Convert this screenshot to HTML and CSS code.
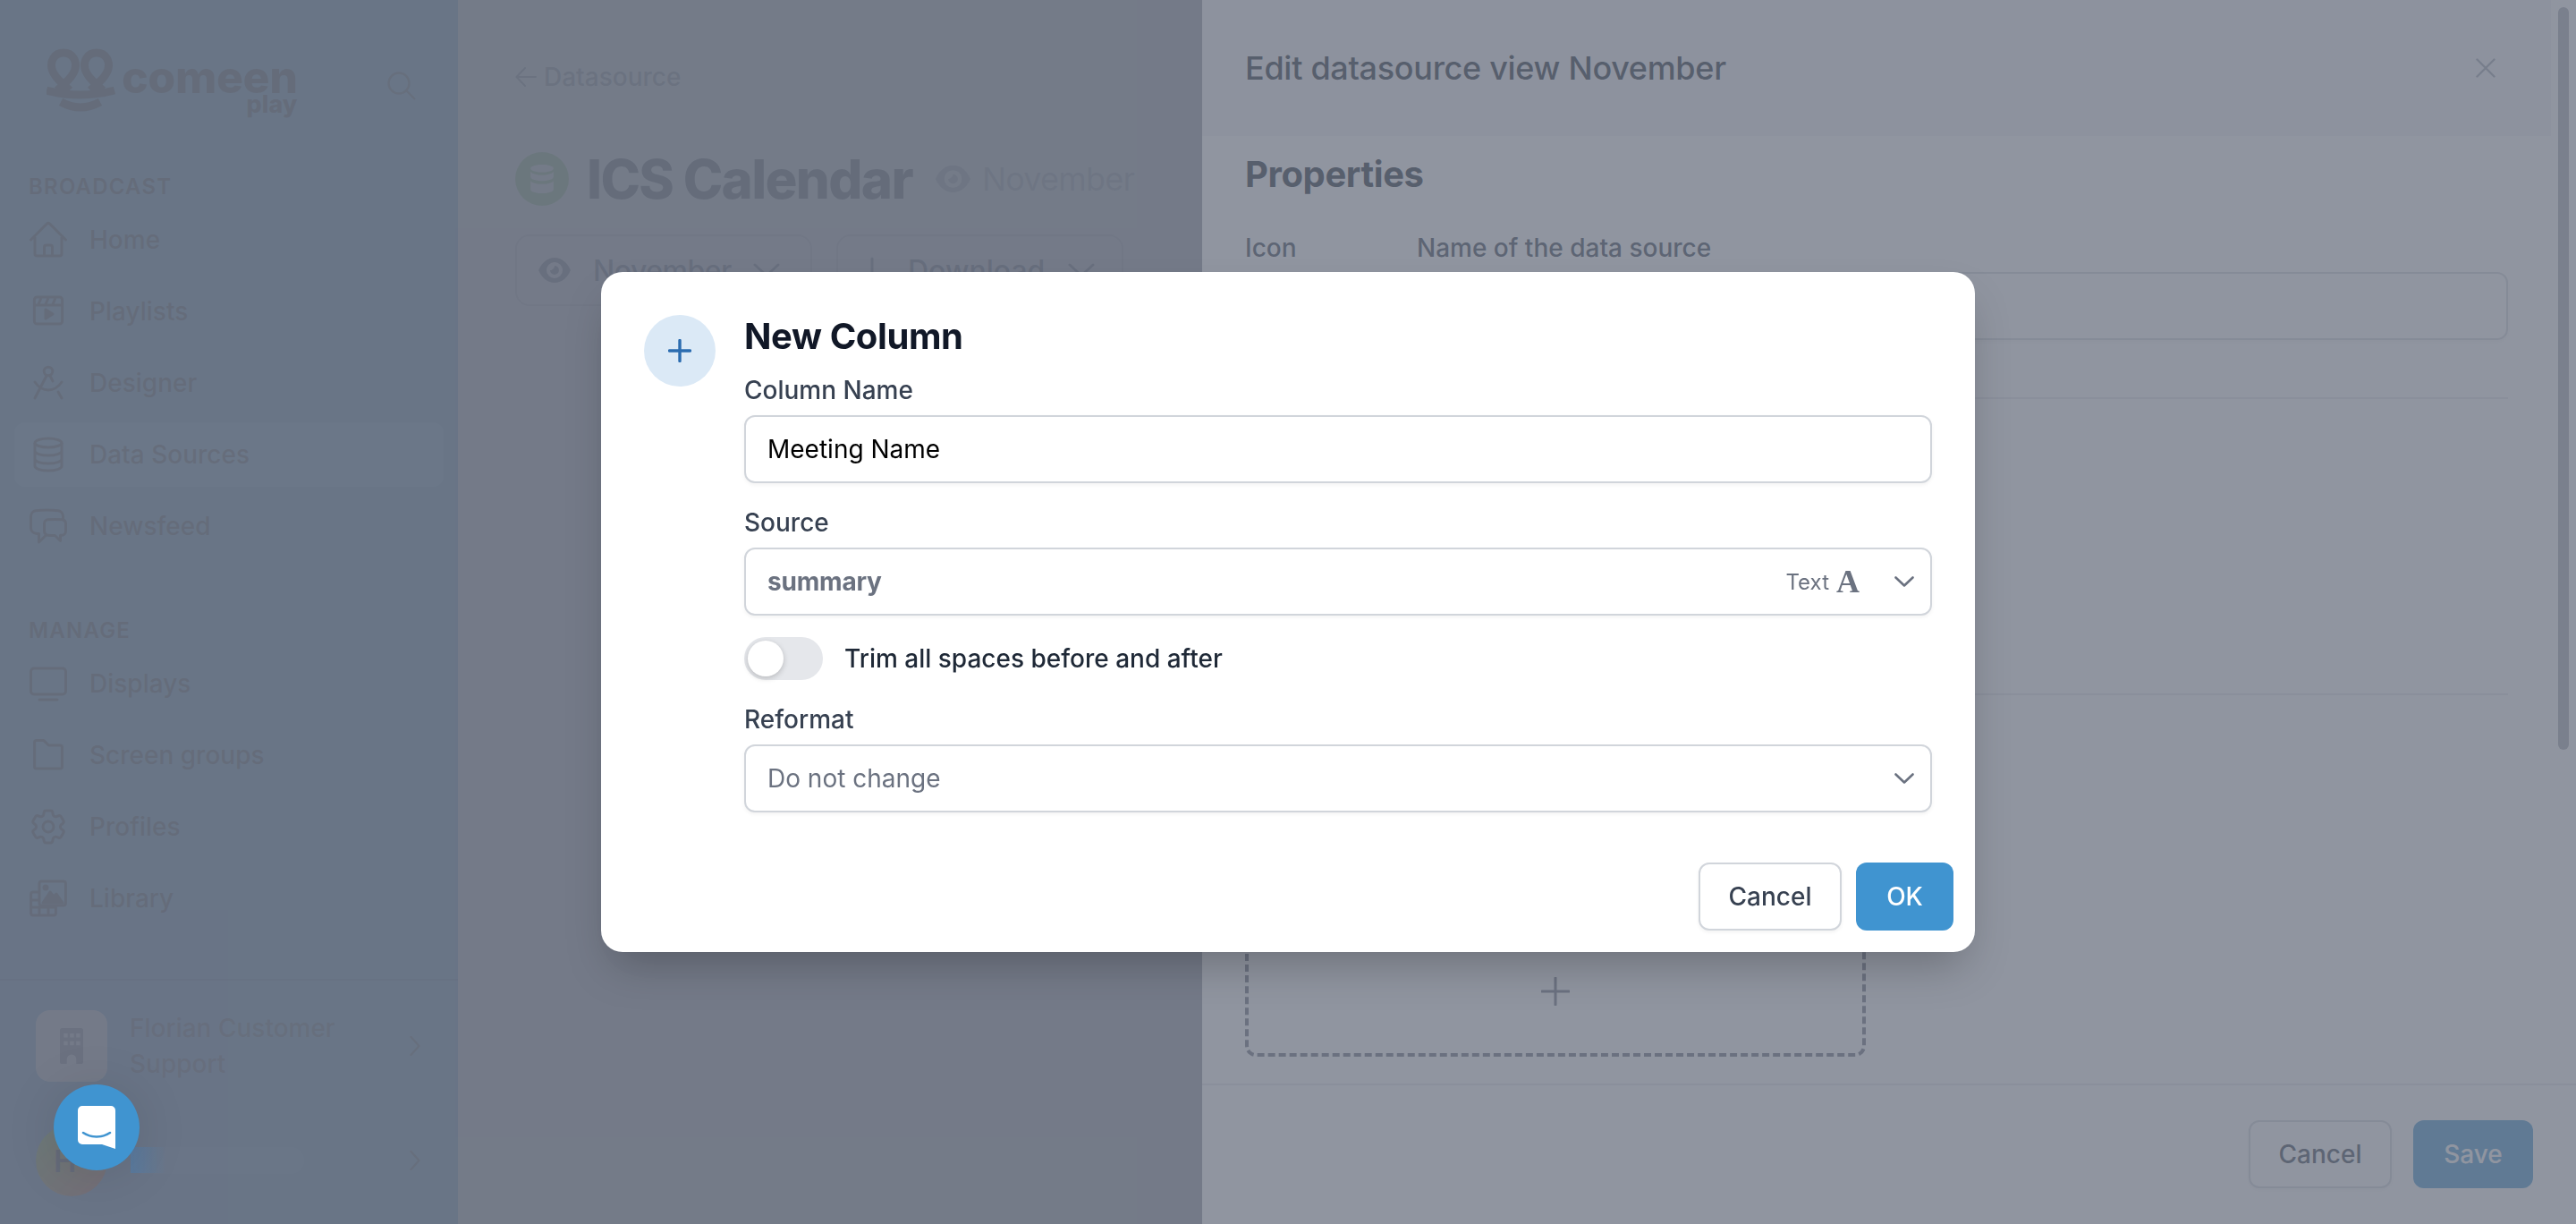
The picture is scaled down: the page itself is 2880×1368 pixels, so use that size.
FILE: index.html
```html
<!DOCTYPE html>
<html lang="en">
<head>
<meta charset="utf-8">
<title>Comeen Play</title>
<link rel="stylesheet" href="styles.css">
</head>
<body>
<div class="app">
  <aside class="sidebar">
    <div class="brand">
      <svg class="logo" viewBox="52 52 78 74" fill="none" stroke="currentColor" stroke-width="9">
        <path d="M71 58C60 58 56 68 58 76C60 84 68 91 78 100"/>
        <path d="M71 58C82 58 86 68 84 76C82 84 74 91 64 100"/>
        <path d="M108 58C97 58 93 68 95 76C97 84 105 91 115 100"/>
        <path d="M108 58C119 58 123 68 121 76C119 84 111 91 101 100"/>
        <path d="M52 100Q90 110 128 100"/>
        <path d="M68 113Q90 125 112 113"/>
      </svg>
      <div class="wordmark">
        <span class="word-main">comeen</span>
        <span class="word-sub">play</span>
      </div>
      <svg class="search" viewBox="0 0 32 32" fill="none" stroke="currentColor" stroke-width="2.4"><circle cx="13" cy="13" r="11.5"/><path d="M21.5 21.5L31 31"/></svg>
    </div>
    <div class="section-title">BROADCAST</div>
    <nav class="nav">
      <a class="nav-item"><svg class="nav-icon" viewBox="0 0 24 24" fill="none" stroke="currentColor" stroke-width="1.5" stroke-linecap="round" stroke-linejoin="round"><path d="M2.25 12l8.954-8.955c.44-.439 1.152-.439 1.591 0L21.75 12M4.5 9.75v10.125c0 .621.504 1.125 1.125 1.125H9.75v-4.875c0-.621.504-1.125 1.125-1.125h2.25c.621 0 1.125.504 1.125 1.125V21h4.125c.621 0 1.125-.504 1.125-1.125V9.75M8.25 21h8.25"/></svg><span>Home</span></a>
      <a class="nav-item"><svg class="nav-icon" viewBox="0 0 24 24" fill="none" stroke="currentColor" stroke-width="1.5" stroke-linejoin="round"><rect x="4.2" y="4" width="15.6" height="15" rx="1.5"/><path d="M4.2 8.5h15.6M8 4.5 6.5 8M12 4.5 10.5 8M16 4.5 14.5 8"/><path d="M10.5 11v5l4-2.5z" fill="currentColor"/></svg><span>Playlists</span></a>
      <a class="nav-item"><svg class="nav-icon" viewBox="0 0 24 24" fill="none" stroke="currentColor" stroke-width="1.5" stroke-linecap="round"><circle cx="12" cy="5.5" r="2.4"/><path d="M11 8 4.5 20.5M13 8l1.5 3M17.5 17l2 3.5M4.5 11.5C7 15 9 16 12 16s5-1 7.500-4.500"/></svg><span>Designer</span></a>
      <a class="nav-item is-active"><svg class="nav-icon" viewBox="0 0 24 24" fill="none" stroke="currentColor" stroke-width="1.5"><ellipse cx="12" cy="5.500" rx="7.500" ry="2.500"/><path d="M4.500 5.500v13c0 1.400 3.400 2.500 7.500 2.500s7.500-1.100 7.500-2.500v-13M4.500 10c0 1.400 3.400 2.500 7.500 2.500s7.500-1.100 7.500-2.500M4.500 14.500c0 1.400 3.400 2.500 7.500 2.500s7.500-1.100 7.500-2.500"/></svg><span>Data Sources</span></a>
      <a class="nav-item"><svg class="nav-icon" viewBox="0 0 24 24" fill="none" stroke="currentColor" stroke-width="1.500" stroke-linecap="round" stroke-linejoin="round"><path d="M20.250 8.511c.884.284 1.500 1.128 1.500 2.097v4.286c0 1.136-.847 2.100-1.980 2.193-.340.027-.680.052-1.020.072v3.091l-3-3c-1.354 0-2.694-.055-4.020-.163a2.115 2.115 0 01-.825-.242m9.345-8.334a2.126 2.126 0 00-.476-.095 48.640 48.640 0 00-8.048 0c-1.131.094-1.976 1.057-1.976 2.192v4.286c0 .837.460 1.580 1.155 1.951m9.345-8.334V6.637c0-1.621-1.152-3.026-2.760-3.235A48.455 48.455 0 0011.250 3c-2.115 0-4.198.137-6.240.402-1.608.209-2.760 1.614-2.760 3.235v6.226c0 1.621 1.152 3.026 2.760 3.235.577.075 1.157.140 1.740.194V21l4.155-4.155"/></svg><span>Newsfeed</span></a>
    </nav>
    <div class="section-title section-manage">MANAGE</div>
    <nav class="nav">
      <a class="nav-item"><svg class="nav-icon" viewBox="0 0 24 24" fill="none" stroke="currentColor" stroke-width="1.500" stroke-linecap="round"><rect x="2.250" y="3.500" width="19.500" height="14.500" rx="1.800"/><path d="M7 21h10"/></svg><span>Displays</span></a>
      <a class="nav-item"><svg class="nav-icon" viewBox="0 0 24 24" fill="none" stroke="currentColor" stroke-width="1.500" stroke-linejoin="round"><path d="M4.300 18.500V4.800c0-.6.400-1 1-1h4.200l2.700 2.700h6.500c.6 0 1 .4 1 1v11c0 .6-.4 1-1 1H5.300c-.6 0-1-.4-1-1z"/></svg><span>Screen groups</span></a>
      <a class="nav-item"><svg class="nav-icon" viewBox="0 0 24 24" fill="none" stroke="currentColor" stroke-width="1.500" stroke-linejoin="round"><path d="M9.594 3.940c.090-.542.560-.940 1.110-.940h2.593c.550 0 1.020.398 1.110.940l.213 1.281c.063.374.313.686.645.870.074.040.147.083.220.127.324.196.720.257 1.075.124l1.217-.456a1.125 1.125 0 011.370.490l1.296 2.247a1.125 1.125 0 01-.260 1.431l-1.003.827c-.293.240-.438.613-.431.992a6.759 6.759 0 010 .255c-.007.378.138.750.430.990l1.005.828c.424.350.534.954.260 1.430l-1.298 2.247a1.125 1.125 0 01-1.369.491l-1.217-.456c-.355-.133-.750-.072-1.076.124a6.570 6.570 0 01-.220.128c-.331.183-.581.495-.644.869l-.213 1.280c-.090.543-.560.941-1.110.941h-2.594c-.550 0-1.020-.398-1.110-.940l-.213-1.281c-.062-.374-.312-.686-.644-.870a6.520 6.520 0 01-.220-.127c-.325-.196-.720-.257-1.076-.124l-1.217.456a1.125 1.125 0 01-1.369-.490l-1.297-2.247a1.125 1.125 0 01.260-1.431l1.004-.827c.292-.240.437-.613.430-.992a6.932 6.932 0 010-.255c.007-.378-.138-.750-.430-.990l-1.004-.828a1.125 1.125 0 01-.260-1.430l1.297-2.247a1.125 1.125 0 011.370-.491l1.216.456c.356.133.751.072 1.076-.124.072-.044.146-.087.220-.128.332-.183.582-.495.644-.869l.214-1.281z"/><circle cx="12" cy="12" r="3"/></svg><span>Profiles</span></a>
      <a class="nav-item"><svg class="nav-icon" viewBox="0 0 24 24" fill="none" stroke="currentColor" stroke-width="1.500" stroke-linejoin="round"><rect x="7" y="2.500" width="14.700" height="13.500" rx="1.300"/><path d="M9 14.500l4-6 2 2.500 1.500-1.500 3.500 5z" fill="currentColor"/><circle cx="10.500" cy="6" r="1" fill="currentColor"/><path d="M7 8.500H3.500c-.7 0-1.200.5-1.200 1.200v10.600c0 .7.500 1.200 1.200 1.200h11.500c.7 0 1.200-.5 1.200-1.200V16M2.300 13h4.700M2.300 17h14M7 17v5M12 17v5"/></svg><span>Library</span></a>
    </nav>
    <div class="account">
      <div class="account-row">
        <div class="org-avatar"><svg class="org-icon" viewBox="0 0 30 46"><path class="org-shape" fill-rule="evenodd" d="M3 0h24a3 3 0 013 3v40a3 3 0 01-3 3h-6v-6a6 6 0 00-12 0v6H3a3 3 0 01-3-3V3a3 3 0 013-3zM5 7v5h5V7zm8 0v5h5V7zm8 0v5h5V7zM5 17v5h5v-5zm8 0v5h5v-5zm8 0v5h5v-5z"/></svg></div>
        <div class="account-name">Florian Customer Support</div>
        <svg class="account-chevron" viewBox="0 0 12 24" fill="none" stroke="currentColor" stroke-width="2.400" stroke-linecap="round" stroke-linejoin="round"><path d="M1.500 2l9 10-9 10"/></svg>
      </div>
      <div class="account-row user-row">
        <div class="user-avatar">H</div>
        <div class="user-name"></div>
        <svg class="account-chevron" viewBox="0 0 12 24" fill="none" stroke="currentColor" stroke-width="2.400" stroke-linecap="round" stroke-linejoin="round"><path d="M1.500 2l9 10-9 10"/></svg>
      </div>
    </div>
  </aside>

  <main class="main">
    <a class="back"><svg class="back-arrow" viewBox="0 0 24 24" fill="none" stroke="currentColor" stroke-width="2" stroke-linecap="round" stroke-linejoin="round"><path d="M23 12H2M11 2 1.500 12 11 22"/></svg><span>Datasource</span></a>
    <header class="page-head">
      <div class="page-icon"><svg class="page-icon-svg" viewBox="0 0 24 30" fill="#fff"><path d="M12 0c6.600 0 12 1.800 12 4s-5.400 4-12 4S0 6.200 0 4s5.400-4 12-4z"/><path d="M0 7.500C2 10 7 11 12 11s10-1 12-3.500V13c0 2.200-5.400 4-12 4S0 15.200 0 13z"/><path d="M0 17c2 2.500 7 3.500 12 3.500S22 19.500 24 17v9c0 2.200-5.400 4-12 4S0 28.200 0 26z"/></svg></div>
      <h1 class="page-title">ICS Calendar</h1>
      <svg class="head-eye" viewBox="0 0 36 28"><path class="eye-shape" fill-rule="evenodd" d="M18 0c9 0 15 7 18 14-3 7-9 14-18 14S3 21 0 14C3 7 9 0 18 0zm0 5a9 9 0 100 18 9 9 0 000-18zm0 4a5 5 0 11-5 5c2 0 5-2 5-5z"/></svg>
      <span class="head-view">November</span>
    </header>
    <div class="toolbar">
      <button class="tool-btn tool-view">
        <svg class="tool-eye" viewBox="0 0 36 28"><path class="eye-shape" fill-rule="evenodd" d="M18 0c9 0 15 7 18 14-3 7-9 14-18 14S3 21 0 14C3 7 9 0 18 0zm0 5a9 9 0 100 18 9 9 0 000-18zm0 4a5 5 0 11-5 5c2 0 5-2 5-5z"/></svg>
        <span>November</span>
        <svg class="tool-chevron" viewBox="0 0 30 16" fill="none" stroke="currentColor" stroke-width="3" stroke-linecap="round" stroke-linejoin="round"><path d="M2 2l13 12L28 2"/></svg>
      </button>
      <button class="tool-btn tool-download">
        <svg class="tool-down" viewBox="0 0 20 30" fill="none" stroke="currentColor" stroke-width="3" stroke-linecap="round" stroke-linejoin="round"><path d="M10 2v25M2 19l8 8 8-8"/></svg>
        <span>Download</span>
        <svg class="tool-chevron" viewBox="0 0 30 16" fill="none" stroke="currentColor" stroke-width="3" stroke-linecap="round" stroke-linejoin="round"><path d="M2 2l13 12L28 2"/></svg>
      </button>
    </div>
  </main>
</div>

<div class="backdrop"></div>

<section class="panel">
  <div class="panel-head">
    <h2 class="panel-title">Edit datasource view November</h2>
    <svg class="panel-close" viewBox="0 0 22 22" fill="none" stroke="currentColor" stroke-width="2.400" stroke-linecap="round"><path d="M1.500 1.500l19 19M20.500 1.500l-19 19"/></svg>
  </div>
  <div class="panel-body">
    <h3 class="panel-sub">Properties</h3>
    <div class="prop-labels"><span class="prop-icon-label">Icon</span><span>Name of the data source</span></div>
    <div class="prop-row"><div class="prop-icon-slot"></div><div class="prop-input"></div></div>
    <div class="rule rule-one"></div>
    <div class="rule rule-two"></div>
    <div class="drop">
      <svg class="drop-plus" viewBox="0 0 32 32" fill="none" stroke="currentColor" stroke-width="3" stroke-linecap="round"><path d="M16 1v30M1 16h30"/></svg>
    </div>
  </div>
  <div class="panel-foot">
    <button class="btn btn-ghost">Cancel</button>
    <button class="btn btn-primary btn-save">Save</button>
  </div>
  <div class="scroll-thumb"></div>
</section>

<div class="backdrop backdrop-top">
  <div class="modal">
    <div class="modal-main">
      <div class="modal-badge"><svg class="modal-plus" viewBox="0 0 26 26" fill="none" stroke="currentColor" stroke-width="3.400" stroke-linecap="round"><path d="M13 1.500v23M1.500 13h23"/></svg></div>
      <form class="form">
        <h2 class="modal-title">New Column</h2>
        <label class="field-label">Column Name</label>
        <div class="field field-input">Meeting Name</div>
        <label class="field-label field-gap">Source</label>
        <div class="field field-select">
          <span class="source-value">summary</span>
          <span class="source-type">Text</span>
          <span class="source-glyph">A</span>
          <svg class="select-chevron" viewBox="0 0 22 12" fill="none" stroke="currentColor" stroke-width="2.600" stroke-linecap="round" stroke-linejoin="round"><path d="M1.500 1.500 11 10.500l9.500-9"/></svg>
        </div>
        <div class="switch-row">
          <span class="switch"><span class="switch-knob"></span></span>
          <span class="switch-label">Trim all spaces before and after</span>
        </div>
        <label class="field-label field-gap">Reformat</label>
        <div class="field field-select">
          <span class="reformat-value">Do not change</span>
          <svg class="select-chevron" viewBox="0 0 22 12" fill="none" stroke="currentColor" stroke-width="2.600" stroke-linecap="round" stroke-linejoin="round"><path d="M1.500 1.500 11 10.500l9.500-9"/></svg>
        </div>
      </form>
    </div>
    <div class="modal-foot">
      <button class="btn btn-ghost btn-cancel">Cancel</button>
      <button class="btn btn-primary btn-ok">OK</button>
    </div>
  </div>
</div>

<div class="name-fade"></div>
<div class="launcher">
  <svg class="launcher-icon" viewBox="0 0 42 48"><path fill="#fff" d="M5 0h32a5 5 0 015 5v43l-15-5H5a5 5 0 01-5-5V5a5 5 0 015-5z"/><path d="M6 30c9 6 21 6 30 0" fill="none" stroke="#4094d0" stroke-width="2.600" stroke-linecap="round"/></svg>
</div>
</body>
</html>
```
FILE: styles.css
```css
* { box-sizing: border-box; }
html, body { margin: 0; height: 100%; overflow: hidden; }
body { font-family: Inter, "Liberation Sans", sans-serif; color: #111827; background: #fff; }
h1, h2, h3 { margin: 0; }
button { font-family: inherit; cursor: default; }

.app { display: flex; height: 1368px; }

/* Sidebar */
.sidebar { width: 512px; flex: none; background: rgb(80, 160, 224); display: flex; flex-direction: column; color: #111827; }
.brand { height: 189px; flex: none; padding: 53px 0 0 52px; display: flex; align-items: flex-start; color: #111827; }
.logo { width: 78px; height: 74px; flex: none; }
.wordmark { display: flex; flex-direction: column; align-items: flex-end; margin: 16px 0 0 6px; font-weight: 800; }
.word-main { font-size: 50px; line-height: 34px; letter-spacing: -0.4px; }
.word-sub { font-size: 27px; line-height: 26px; margin-top: 1px; }
.search { width: 32px; height: 32px; margin: 27px 0 0 100px; color: #374151; flex: none; }
.section-title { height: 40px; line-height: 40px; padding-left: 32px; font-size: 24px; font-weight: 600; letter-spacing: 1.2px; flex: none; }
.section-manage { margin-top: 61px; }
.nav { display: flex; flex-direction: column; gap: 8px; margin: 3px 16px 0; flex: none; }
.nav-item { height: 72px; display: flex; align-items: center; gap: 22px; padding-left: 14px; border-radius: 12px; font-size: 28px; font-weight: 500; }
.nav-item.is-active { background: rgb(110, 190, 250); color: #1f2937; }
.nav-icon { width: 48px; height: 48px; flex: none; }
.account { margin-top: 54px; border-top: 2px solid rgba(17, 24, 39, 0.3); padding: 33px 40px 0; flex: none; }
.account-row { display: flex; align-items: center; height: 80px; }
.org-avatar { width: 80px; height: 80px; border-radius: 16px; background: #fff; display: flex; align-items: center; justify-content: center; flex: none; }
.org-icon { width: 30px; height: 40px; }
.org-shape { fill: #6b7280; }
.account-name { width: 250px; margin-left: 25px; font-size: 28px; font-weight: 500; line-height: 40px; color: #374151; }
.account-chevron { width: 12px; height: 24px; margin-left: auto; margin-right: 2px; color: #374151; flex: none; }
.user-row { margin-top: 48px; }
.user-avatar { width: 80px; height: 80px; border-radius: 50%; background: linear-gradient(135deg, rgb(130, 240, 20), rgb(255, 70, 0)); display: flex; align-items: center; padding-left: 20px; font-size: 34px; font-weight: 600; flex: none; }
.user-name { width: 194px; height: 30px; margin-left: 26px; border-radius: 15px; background: rgb(100, 175, 230); }

/* Main */
.main { flex: 1; padding: 66px 0 0 64px; background: #fff; }
.back { display: flex; align-items: center; height: 40px; gap: 8px; font-size: 28px; font-weight: 500; color: #6b7280; }
.back-arrow { width: 24px; height: 24px; flex: none; }
.page-head { display: flex; align-items: center; height: 60px; margin-top: 64px; }
.page-icon { width: 60px; height: 60px; border-radius: 50%; background: rgb(120, 190, 90); display: flex; align-items: center; justify-content: center; flex: none; }
.page-icon-svg { width: 26px; height: 32px; }
.page-title { margin-left: 20px; font-size: 60px; line-height: 60px; font-weight: 800; letter-spacing: -1.7px; color: #111827; white-space: nowrap; }
.head-eye { width: 39px; height: 32px; margin-left: 26px; flex: none; }
.eye-shape { fill: #4b5563; }
.head-eye .eye-shape { fill: #9ca3af; }
.head-view { margin-left: 13px; font-size: 36px; letter-spacing: -0.8px; color: #9ca3af; }
.toolbar { display: flex; gap: 27px; margin-top: 32px; }
.tool-btn { height: 80px; display: flex; align-items: center; border: 2px solid #c4c8cf; border-radius: 16px; background: #fff; font-size: 32px; font-weight: 500; color: #374151; padding: 0; }
.tool-view { width: 332px; padding-left: 24px; letter-spacing: -0.5px; }
.tool-download { width: 321px; padding-left: 28px; }
.tool-eye { width: 36px; height: 28px; margin-right: 25px; flex: none; }
.tool-down { width: 20px; height: 30px; margin-right: 30px; flex: none; color: #4b5563; }
.tool-chevron { width: 30px; height: 16px; margin-left: 26px; color: #4b5563; flex: none; }
.tool-view .tool-chevron { margin-left: 24px; }

/* Backdrops */
.backdrop { position: fixed; inset: 0; background: rgba(107, 114, 128, 0.75); }
.backdrop-top { display: flex; align-items: center; justify-content: center; }

/* Slide-over panel */
.panel { position: fixed; top: 0; right: 0; bottom: 0; width: 1536px; background: #fff; display: flex; flex-direction: column; }
.panel-head { height: 152px; width: 1508px; background: #f3f4f6; display: flex; align-items: center; justify-content: space-between; padding: 0 62px 0 48px; flex: none; }
.panel-title { font-size: 36px; font-weight: 500; letter-spacing: -0.3px; color: #1f2937; }
.panel-close { width: 22px; height: 22px; color: #9ca3af; }
.panel-body { flex: 1; padding: 15px 48px 0; display: flex; flex-direction: column; }
.panel-sub { font-size: 40px; line-height: 56px; font-weight: 700; letter-spacing: -0.4px; color: #1f2937; }
.prop-labels { display: flex; height: 40px; margin-top: 34px; font-size: 28px; font-weight: 500; line-height: 40px; color: #374151; }
.prop-icon-label { width: 192px; }
.prop-row { display: flex; margin-top: 7px; }
.prop-icon-slot { width: 192px; flex: none; }
.prop-input { flex: 1; height: 76px; border: 2px solid #d1d5db; border-radius: 12px; margin-right: 28px; box-shadow: 0 2px 4px rgba(0, 0, 0, 0.05); }
.rule { height: 2px; background: #e5e7eb; margin-right: 28px; }
.rule-one { margin-top: 64px; }
.rule-two { margin-top: 329px; }
.drop { width: 694px; height: 404px; border: 4px dashed #6b7280; border-radius: 12px; display: flex; align-items: flex-end; justify-content: center; padding-bottom: 53px; color: #6b7280; flex: none; }
.drop-plus { width: 32px; height: 32px; }
.panel-foot { height: 157px; border-top: 2px solid #e5e7eb; display: flex; justify-content: flex-end; gap: 24px; padding: 39px 48px 0; flex: none; }
.scroll-thumb { position: absolute; top: 8px; right: 8px; width: 12px; height: 830px; border-radius: 6px; background: #6b7280; opacity: 0.6; }

/* Buttons */
.btn { height: 76px; border-radius: 12px; font-size: 28px; font-weight: 500; padding: 0; }
.btn-ghost { width: 160px; background: #fff; border: 2px solid #d1d5db; color: #374151; box-shadow: 0 2px 4px rgba(0, 0, 0, 0.05); }
.btn-primary { background: #4094d0; border: 0; color: #fff; }
.btn-save { width: 134px; }
.btn-ok { width: 109px; }

/* Modal */
.modal { width: 1536px; height: 760px; background: #fff; border-radius: 24px; box-shadow: 0 25px 50px -12px rgba(0, 0, 0, 0.25); padding: 44px 48px 24px; display: flex; flex-direction: column; }
.modal-main { display: flex; gap: 32px; }
.modal-badge { width: 80px; height: 80px; margin-top: 4px; border-radius: 50%; background: #dbe9f6; display: flex; align-items: center; justify-content: center; flex: none; }
.modal-plus { width: 26px; height: 26px; color: #2b6cb0; }
.form { flex: 1; display: flex; flex-direction: column; }
.modal-title { font-size: 40px; line-height: 56px; font-weight: 700; letter-spacing: -0.4px; color: #111827; margin-bottom: 12px; }
.field-label { height: 40px; line-height: 40px; font-size: 28px; font-weight: 500; color: #374151; margin-bottom: 8px; }
.field-gap { margin-top: 24px; }
.field { height: 76px; border: 2px solid #d1d5db; border-radius: 12px; background: #fff; box-shadow: 0 2px 4px rgba(0, 0, 0, 0.05); display: flex; align-items: center; padding: 0 18px 0 24px; font-size: 28px; }
.field-input { color: #000; }
.source-value { font-weight: 700; letter-spacing: -0.2px; color: #6b7280; }
.reformat-value { color: #6b7280; }
.source-type { margin-left: auto; font-size: 24px; color: #6b7280; }
.source-glyph { width: 24px; margin-left: 8px; font-family: "Liberation Serif", serif; font-weight: 700; font-size: 36px; line-height: 36px; color: #6b7280; text-align: center; }
.select-chevron { width: 22px; height: 12px; margin-left: auto; color: #6b7280; flex: none; }
.source-glyph + .select-chevron { margin-left: 41px; }
.switch-row { display: flex; align-items: center; gap: 24px; margin-top: 24px; }
.switch { width: 88px; height: 48px; border-radius: 24px; background: #e5e7eb; padding: 4px; flex: none; }
.switch-knob { display: block; width: 40px; height: 40px; border-radius: 50%; background: #fff; box-shadow: 0 2px 6px rgba(0, 0, 0, 0.2); }
.switch-label { font-size: 28px; font-weight: 500; color: #1f2937; }
.modal-foot { display: flex; justify-content: flex-end; gap: 16px; margin: 56px -24px 0 0; }

/* Messenger launcher */
.name-fade { position: fixed; left: 146px; top: 1282px; width: 40px; height: 29px; background: linear-gradient(90deg, rgb(90, 122, 158), rgba(105, 117, 134, 0)); }
.launcher { position: fixed; left: 60px; top: 1212px; width: 96px; height: 96px; border-radius: 50%; background: #4094d0; box-shadow: 0 4px 60px rgba(0, 0, 0, 0.12); display: flex; align-items: center; justify-content: center; }
.launcher-icon { width: 42px; height: 48px; }
```
